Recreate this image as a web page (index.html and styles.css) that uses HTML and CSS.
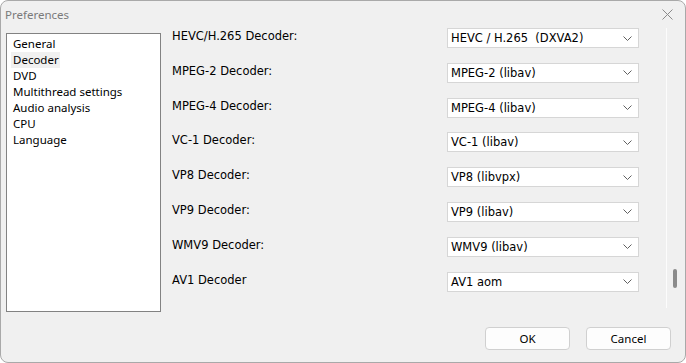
FILE: index.html
```html
<!DOCTYPE html>
<html>
<head>
<meta charset="utf-8">
<title>Preferences</title>
<link rel="stylesheet" href="styles.css">
</head>
<body>
<div class="window">
  <div class="titlebar">
    <span class="title">Preferences</span>
    <svg class="close" width="11" height="11" viewBox="0 0 11 11"><path d="M0.5 0.5 L10.5 10.5 M10.5 0.5 L0.5 10.5" stroke="#8a8a8a" stroke-width="1" fill="none"/></svg>
  </div>
  <div class="main">
    <ul class="listbox">
      <li>General</li>
      <li class="sel">Decoder</li>
      <li>DVD</li>
      <li>Multithread settings</li>
      <li>Audio analysis</li>
      <li>CPU</li>
      <li>Language</li>
    </ul>
    <div class="settings">
      <div class="label">HEVC/H.265 Decoder:</div>
      <div class="combo"><span>HEVC / H.265  (DXVA2)</span><svg width="9" height="5" viewBox="0 0 9 5"><polyline points="0.5,0.5 4.5,4.5 8.5,0.5" stroke="#606060" fill="none" stroke-width="1"/></svg></div>
      <div class="label">MPEG-2 Decoder:</div>
      <div class="combo"><span>MPEG-2 (libav)</span><svg width="9" height="5" viewBox="0 0 9 5"><polyline points="0.5,0.5 4.5,4.5 8.5,0.5" stroke="#606060" fill="none" stroke-width="1"/></svg></div>
      <div class="label">MPEG-4 Decoder:</div>
      <div class="combo"><span>MPEG-4 (libav)</span><svg width="9" height="5" viewBox="0 0 9 5"><polyline points="0.5,0.5 4.5,4.5 8.5,0.5" stroke="#606060" fill="none" stroke-width="1"/></svg></div>
      <div class="label">VC-1 Decoder:</div>
      <div class="combo"><span>VC-1 (libav)</span><svg width="9" height="5" viewBox="0 0 9 5"><polyline points="0.5,0.5 4.5,4.5 8.5,0.5" stroke="#606060" fill="none" stroke-width="1"/></svg></div>
      <div class="label">VP8 Decoder:</div>
      <div class="combo"><span>VP8 (libvpx)</span><svg width="9" height="5" viewBox="0 0 9 5"><polyline points="0.5,0.5 4.5,4.5 8.5,0.5" stroke="#606060" fill="none" stroke-width="1"/></svg></div>
      <div class="label">VP9 Decoder:</div>
      <div class="combo"><span>VP9 (libav)</span><svg width="9" height="5" viewBox="0 0 9 5"><polyline points="0.5,0.5 4.5,4.5 8.5,0.5" stroke="#606060" fill="none" stroke-width="1"/></svg></div>
      <div class="label">WMV9 Decoder:</div>
      <div class="combo"><span>WMV9 (libav)</span><svg width="9" height="5" viewBox="0 0 9 5"><polyline points="0.5,0.5 4.5,4.5 8.5,0.5" stroke="#606060" fill="none" stroke-width="1"/></svg></div>
      <div class="label">AV1 Decoder</div>
      <div class="combo"><span>AV1 aom</span><svg width="9" height="5" viewBox="0 0 9 5"><polyline points="0.5,0.5 4.5,4.5 8.5,0.5" stroke="#606060" fill="none" stroke-width="1"/></svg></div>
    </div>
    <div class="scrollarea">
      <div class="thumb"></div>
    </div>
  </div>
  <div class="footer">
    <button class="btn">OK</button>
    <button class="btn">Cancel</button>
  </div>
</div>
</body>
</html>
```
FILE: styles.css
```css
html, body {
  margin: 0;
  padding: 0;
  background: #ffffff;
}
.window {
  width: 686px;
  height: 363px;
  box-sizing: border-box;
  border: 1px solid #a9a9a9;
  border-radius: 8px;
  background: #f0f0f0;
  display: flex;
  flex-direction: column;
  overflow: hidden;
}
.titlebar {
  height: 27px;
  display: flex;
  align-items: center;
  justify-content: space-between;
  padding: 0 12px 0 4px;
  flex: none;
}
.title {
  font-family: "Noto Sans", sans-serif;
  font-size: 11.5px;
  color: #7a7a7a;
}
.close {
  display: block;
}
.main {
  display: flex;
  height: 281px;
  flex: none;
}
.listbox {
  list-style: none;
  margin: 5px 0 0 5px;
  padding: 2px 0 0 4px;
  width: 155px;
  height: 279px;
  box-sizing: border-box;
  border: 1px solid #828282;
  background: #ffffff;
  font-family: "Noto Sans", sans-serif;
  font-size: 11.5px;
  color: #000;
  flex: none;
}
.listbox li {
  height: 16px;
  line-height: 16px;
  padding: 0 1px 0 2px;
  width: max-content;
}
.listbox li.sel {
  background: #f0f0f0;
}
.settings {
  margin-left: 11px;
  display: grid;
  grid-template-columns: 275px 192px;
  grid-template-rows: repeat(8, 20px);
  row-gap: 14.8px;
  align-content: start;
  flex: none;
}
.label {
  font-family: "DejaVu Sans", sans-serif;
  font-size: 11.5px;
  color: #000;
  line-height: 14px;
  padding-top: 1px;
}
.combo {
  box-sizing: border-box;
  height: 20px;
  background: #ffffff;
  border: 1px solid #d6d6d6;
  display: flex;
  align-items: center;
  justify-content: space-between;
  padding: 0 6px 0 3px;
  font-family: "DejaVu Sans", sans-serif;
  font-size: 11.5px;
  color: #000;
  white-space: pre;
}
.combo svg {
  display: block;
}
.scrollarea {
  margin-left: 27px;
  width: 18px;
  height: 280px;
  box-sizing: border-box;
  border-left: 1px solid #fcfcfc;
  display: flex;
  flex-direction: column;
  justify-content: flex-end;
  padding: 0 0 20px 6px;
}
.thumb {
  width: 4px;
  height: 19px;
  background: #8b8b8b;
  border-radius: 2px;
}
.footer {
  display: flex;
  justify-content: flex-end;
  gap: 16px;
  padding: 18px 14px 0 0;
}
.btn {
  width: 85px;
  height: 23px;
  box-sizing: border-box;
  background: #fdfdfd;
  border: 1px solid #d0d0d0;
  border-radius: 4px;
  font-family: "Noto Sans", sans-serif;
  font-size: 11.5px;
  color: #000;
  padding: 0;
  margin: 0;
}
```
